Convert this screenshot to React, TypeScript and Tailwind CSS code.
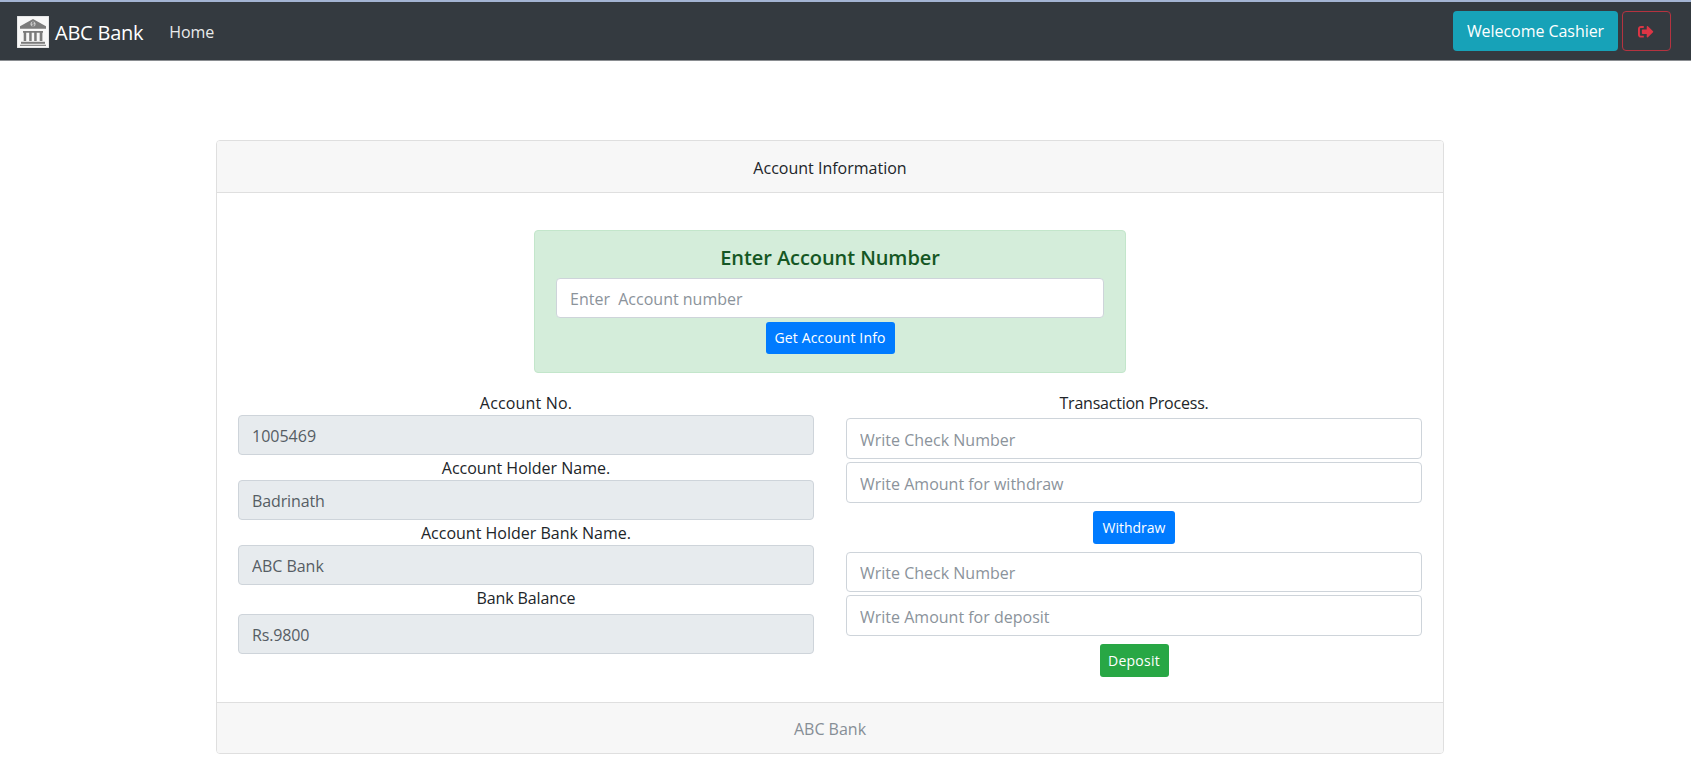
import type { ReactNode } from "react";
import { FaSignOutAlt } from "react-icons/fa";

const inputBase =
  "block w-full rounded-[4px] border border-[#ced4da] px-[13px] pt-[2px] text-[16px] leading-6 outline-none";

function Field({
  placeholder,
  className,
}: {
  placeholder: string;
  className: string;
}) {
  return (
    <input
      type="text"
      placeholder={placeholder}
      className={`${inputBase} bg-white text-[#495057] placeholder:text-[#8b939b] placeholder:opacity-100 ${className}`}
    />
  );
}

function ReadOnly({
  label,
  value,
  className = "",
  labelClass = "",
  valueClass = "",
}: {
  label: string;
  value: string;
  className?: string;
  labelClass?: string;
  valueClass?: string;
}) {
  return (
    <div className="flex flex-col">
      <span className={`text-center leading-6 ${labelClass}`}>{label}</span>
      <input
        readOnly
        value={value}
        className={`${inputBase} h-10 bg-[#e7ebee] text-[#565d64] ${valueClass} ${className}`}
      />
    </div>
  );
}

function SmallButton({
  children,
  className,
}: {
  children: ReactNode;
  className: string;
}) {
  return (
    <button
      type="button"
      className={`flex items-center justify-center rounded-[3px] text-[14px] leading-5 text-white ${className}`}
    >
      {children}
    </button>
  );
}

function BankLogo() {
  return (
    <svg viewBox="0 0 32 32" className="mt-px ml-px h-8 w-8 shrink-0">
      <rect width="32" height="32" fill="#f8f8f8" stroke="#c9cbcd" strokeWidth="0.8" />
      <path d="M16 3 L29 10.2 V12.8 H3 V10.2 Z" fill="#7c7c7c" />
      <circle cx="16" cy="8" r="2.5" fill="#d6d6d6" />
      <path
        d="M17.3 6.8c-.5-.6-2.500-.6-2.500.4s2.600.6 2.600 1.700-2.200 1-2.800.3M16 5.600v4.900"
        fill="none"
        stroke="#707070"
        strokeWidth="0.7"
      />
      <path
        d="M6 15h20v1.700h-.6V25h-2.700v-8.300h-3V25h-2.500v-8.300h-2.500V25h-2.500v-8.300H9.200V25H6.700v-8.300H6z"
        fill="#7c7c7c"
      />
      <path d="M4 25.800h24v2H4z" fill="#7c7c7c" />
      <path d="M3 28.700h26V30H3z" fill="#8c8c8c" />
    </svg>
  );
}

export default function App() {
  return (
    <div className="min-h-[772px] bg-white font-['Open_Sans','Segoe_UI',sans-serif] text-[16px] leading-6 text-[#212529]">
      <nav className="flex h-[61px] items-center border-t-2 border-b border-t-[#a3b4d3] border-b-[#8a8d91] bg-[#343a40] pr-5 pl-4">
        <a className="flex items-center" href="#">
          <BankLogo />
          <span className="ml-[6px] pt-[3px] text-[20px] leading-[30px] tracking-[-0.23px] text-white">
            ABC Bank
          </span>
        </a>
        <a className="ml-[26px] pt-px tracking-[-0.08px] text-[#e9eaeb]" href="#">
          Home
        </a>
        <div className="ml-auto flex gap-1">
          <button
            type="button"
            className="flex h-10 w-[165px] items-center justify-center rounded-[4px] bg-[#17a2b8] tracking-[-0.05px] text-white"
          >
            Welecome Cashier
          </button>
          <button
            type="button"
            aria-label="Sign out"
            className="flex h-10 w-[49px] items-center justify-center rounded-[4px] border border-[#b53340] pt-px pr-px"
          >
            <FaSignOutAlt className="h-[15.5px] w-[15.5px] text-[#dc3545]" />
          </button>
        </div>
      </nav>

      <main className="mt-[79px] ml-[216px] flex h-[614px] w-[1228px] flex-col rounded-[4px] border border-[#dfdfdf]">
        <header className="flex h-[52px] items-center justify-center rounded-t-[3px] border-b border-[#dfdfdf] bg-[#f7f7f7] pt-[2px]">
          Account Information
        </header>

        <section className="flex-1 px-[21px] pt-[37px]">
          <div className="mx-auto flex h-[143px] w-[592px] flex-col items-center rounded-[4px] border border-[#c3e6cb] bg-[#d4edda] px-[21px] pt-[14px]">
            <h4 className="text-[20px] leading-[25px] font-semibold tracking-[-0.07px] text-[#155724]">
              Enter Account Number
            </h4>
            <Field placeholder={"Enter\u00a0 Account number"} className="mt-2 h-10" />
            <SmallButton className="mt-1 h-8 w-[129px] bg-[#007bff] tracking-[0.15px]">
              Get Account Info
            </SmallButton>
          </div>

          <div className="mt-[18px] grid grid-cols-2 gap-[32px]">
            <div className="flex flex-col gap-px">
              <ReadOnly label="Account No." value="1005469" labelClass="tracking-[0.17px]" />
              <ReadOnly
                label="Account Holder Name."
                value="Badrinath"
                valueClass="tracking-[-0.12px]"
              />
              <ReadOnly
                label="Account Holder Bank Name."
                value="ABC Bank"
                valueClass="tracking-[-0.05px]"
              />
              <ReadOnly
                label="Bank Balance"
                value="Rs.9800"
                className="mt-1"
                labelClass="tracking-[-0.11px]"
                valueClass="tracking-[-0.15px]"
              />
            </div>

            <div className="flex flex-col items-center">
              <span className="leading-6 tracking-[-0.22px]">Transaction Process.</span>
              <Field placeholder="Write Check Number" className="mt-[3px] h-[41px]" />
              <Field placeholder="Write Amount for withdraw" className="mt-[3px] h-[41px]" />
              <SmallButton className="mt-2 h-[33px] w-[82px] bg-[#007bff]">Withdraw</SmallButton>
              <Field placeholder="Write Check Number" className="mt-2 h-10" />
              <Field placeholder="Write Amount for deposit" className="mt-[3px] h-[41px]" />
              <SmallButton className="mt-2 h-[33px] w-[69px] bg-[#28a745] tracking-[0.25px]">
                Deposit
              </SmallButton>
            </div>
          </div>
        </section>

        <footer className="flex h-[51px] items-center justify-center rounded-b-[3px] border-t border-[#dfdfdf] bg-[#f7f7f7] pt-[2px] text-[#868e96]">
          ABC Bank
        </footer>
      </main>
    </div>
  );
}
